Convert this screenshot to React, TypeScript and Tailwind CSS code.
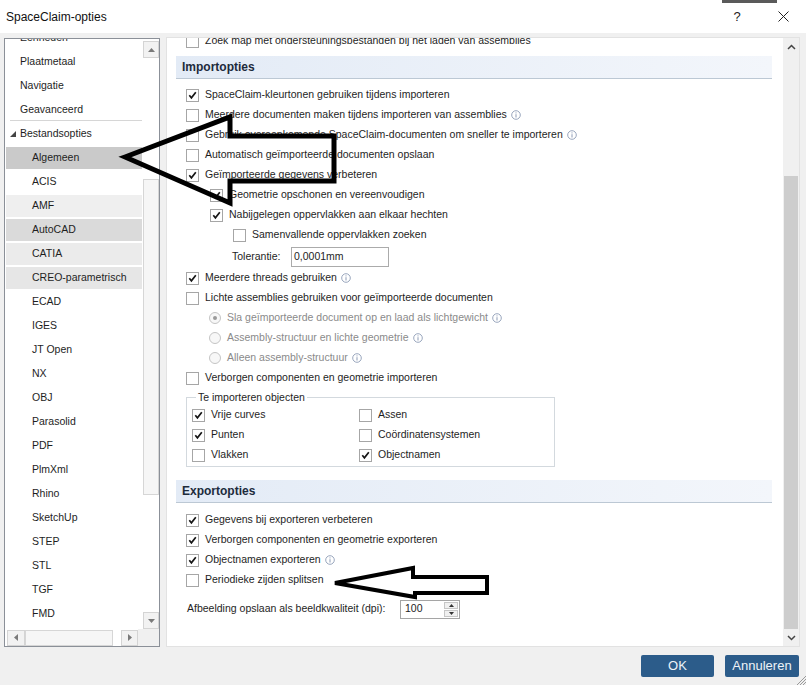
import React from 'react';

type Item = { t: string; sub?: boolean; bg?: string; sep?: boolean; tri?: boolean };

const listItems: Item[] = [
  { t: 'Eenheden' },
  { t: 'Plaatmetaal' },
  { t: 'Navigatie' },
  { t: 'Geavanceerd', sep: true },
  { t: 'Bestandsopties', tri: true },
  { t: 'Algemeen', sub: true, bg: 'bg-[#cacaca]' },
  { t: 'ACIS', sub: true },
  { t: 'AMF', sub: true, bg: 'bg-[#efefef]' },
  { t: 'AutoCAD', sub: true, bg: 'bg-[#dadada]' },
  { t: 'CATIA', sub: true, bg: 'bg-[#ebebeb]' },
  { t: 'CREO-parametrisch', sub: true, bg: 'bg-[#e6e6e6]' },
  { t: 'ECAD', sub: true },
  { t: 'IGES', sub: true },
  { t: 'JT Open', sub: true },
  { t: 'NX', sub: true },
  { t: 'OBJ', sub: true },
  { t: 'Parasolid', sub: true },
  { t: 'PDF', sub: true },
  { t: 'PlmXml', sub: true },
  { t: 'Rhino', sub: true },
  { t: 'SketchUp', sub: true },
  { t: 'STEP', sub: true },
  { t: 'STL', sub: true },
  { t: 'TGF', sub: true },
  { t: 'FMD', sub: true },
];

function Check({ on }: { on?: boolean }) {
  return (
    <span className="w-[13px] h-[13px] shrink-0 border border-[#a6a6a6] bg-white flex items-center justify-center">
      {on && (
        <svg width="9" height="9" viewBox="0 0 9 9">
          <path d="M1.3 4.3 L3.4 6.8 L7.8 1.3" fill="none" stroke="#151515" strokeWidth="1.7" />
        </svg>
      )}
    </span>
  );
}

function Radio({ on }: { on?: boolean }) {
  return (
    <span className="w-[12px] h-[12px] shrink-0 rounded-full border border-[#c4c4c4] bg-[#f7f7f7] flex items-center justify-center">
      {on && <span className="w-[4px] h-[4px] rounded-full bg-[#9a9a9a]" />}
    </span>
  );
}

function Info() {
  return (
    <svg width="10" height="10" viewBox="0 0 10 10" className="ml-[4px] shrink-0">
      <circle cx="5" cy="5" r="4.3" fill="none" stroke="#8d9cb6" strokeWidth="0.9" />
      <rect x="4.5" y="4.2" width="1" height="3.3" fill="#8d9cb6" />
      <rect x="4.5" y="2.4" width="1" height="1" fill="#8d9cb6" />
    </svg>
  );
}

function Opt({ on, info, pad, children }: { on?: boolean; info?: boolean; pad: string; children: React.ReactNode }) {
  return (
    <div className={`h-[20px] flex items-center ${pad}`}>
      <Check on={on} />
      <span className="ml-[6px] whitespace-nowrap">{children}</span>
      {info && <Info />}
    </div>
  );
}

function RadioOpt({ on, children }: { on?: boolean; children: React.ReactNode }) {
  return (
    <div className="h-[20px] flex items-center pl-[42px] text-[#8a8a8a]">
      <Radio on={on} />
      <span className="ml-[6px] whitespace-nowrap">{children}</span>
      <Info />
    </div>
  );
}

function Header({ children }: { children: React.ReactNode }) {
  return (
    <div className="ml-[9px] mr-[11px] h-[23px] flex items-center pl-[6px] font-bold text-[12px] text-[#1d2b3c] bg-linear-to-r from-[#e3ebf6] to-[#f3f6fb] border-b border-[#bcc8d4]">
      {children}
    </div>
  );
}

export default function App() {
  return (
    <div className="relative w-[806px] h-[685px] overflow-hidden bg-[#f0f0f0] text-[10.5px] text-[#1e1e1e] font-['Liberation_Sans',Arial,sans-serif]">
      {/* title bar */}
      <div className="h-[33px] bg-white flex items-center">
        <span className="pl-[6px] text-[12px] text-[#111]">SpaceClaim-opties</span>
        <div className="ml-auto flex items-center h-full">
          <span className="w-[46px] text-center text-[13px] text-[#222]">?</span>
          <span className="w-[46px] flex justify-center">
            <svg width="11" height="11" viewBox="0 0 11 11">
              <path d="M0.5 0.5 L10.5 10.5 M10.5 0.5 L0.5 10.5" stroke="#222" strokeWidth="1" />
            </svg>
          </span>
        </div>
      </div>
      <div className="absolute top-0 left-[722px] w-[55px] h-[3px] bg-[#5a5a5a]" />

      {/* body */}
      <div className="flex pt-[5px]">
        {/* left tree */}
        <div className="ml-[4px] w-[156px] h-[609px] border border-[#8b9098] bg-white flex flex-col">
          <div className="flex flex-1 min-h-0">
            <div className="flex-1 overflow-hidden">
              <div className="mt-[-13px]">
                {listItems.map((it) => (
                  <div key={it.t} className="h-[24px] p-[1px]">
                    <div
                      className={`h-full flex items-center ${it.bg ?? ''} ${it.sub ? 'pl-[26px]' : it.sep ? 'ml-[4px] pl-[10px] border-b border-[#d6d6d6]' : it.tri ? 'pl-[4px]' : 'pl-[14px]'}`}
                    >
                      {it.tri && (
                        <svg width="6" height="6" viewBox="0 0 6 6" className="mr-[4px]">
                          <path d="M6 0 L6 6 L0 6 Z" fill="#444" />
                        </svg>
                      )}
                      <span className="whitespace-nowrap">{it.t}</span>
                    </div>
                  </div>
                ))}
              </div>
            </div>
            {/* vertical scrollbar */}
            <div className="w-[16px] flex flex-col bg-white">
              <div className="h-[17px] mt-[2px] border border-[#d4d4d4] bg-[#f2f2f2] flex items-center justify-center">
                <svg width="7" height="4" viewBox="0 0 7 4"><path d="M0 4 L3.5 0 L7 4 Z" fill="#7a7a7a" /></svg>
              </div>
              <div className="flex-1 flex flex-col">
                <div className="mt-[121px] h-[316px] border border-[#d6d6d6] bg-[#f6f6f6]" />
              </div>
              <div className="h-[17px] border border-[#d4d4d4] bg-[#f2f2f2] flex items-center justify-center">
                <svg width="7" height="4" viewBox="0 0 7 4"><path d="M0 0 L3.5 4 L7 0 Z" fill="#7a7a7a" /></svg>
              </div>
            </div>
          </div>
          {/* horizontal scrollbar */}
          <div className="h-[17px] flex items-center">
            <div className="h-[16px] w-[18px] ml-[2px] border border-[#d4d4d4] bg-[#f2f2f2] flex items-center justify-center">
              <svg width="4" height="7" viewBox="0 0 4 7"><path d="M4 0 L0 3.5 L4 7 Z" fill="#7a7a7a" /></svg>
            </div>
            <div className="h-[16px] w-[88px] border border-[#d6d6d6] bg-[#f6f6f6]" />
            <div className="h-[16px] w-[17px] ml-[8px] border border-[#d4d4d4] bg-[#f2f2f2] flex items-center justify-center">
              <svg width="4" height="7" viewBox="0 0 4 7"><path d="M0 0 L4 3.5 L0 7 Z" fill="#7a7a7a" /></svg>
            </div>
            <div className="flex-1 h-full bg-[#f0f0f0]" />
          </div>
        </div>

        {/* main options panel */}
        <div className="ml-[6px] w-[634px] h-[610px] mt-[-1px] border border-[#e2e2e2] bg-white flex">
          <div className="flex-1 overflow-hidden">
            <div className="mt-[-7px]">
              <Opt pad="pl-[19px]">Zoek map met ondersteuningsbestanden bij het laden van assemblies</Opt>
            </div>
            <div className="mt-[5px]">
              <Header>Importopties</Header>
            </div>
            <div className="mt-[6px]">
              <Opt on pad="pl-[19px]">SpaceClaim-kleurtonen gebruiken tijdens importeren</Opt>
              <Opt info pad="pl-[19px]">Meerdere documenten maken tijdens importeren van assemblies</Opt>
              <Opt info pad="pl-[19px]">Gebruik overeenkomende SpaceClaim-documenten om sneller te importeren</Opt>
              <Opt pad="pl-[19px]">Automatisch geïmporteerde documenten opslaan</Opt>
              <Opt on pad="pl-[19px]">Geïmporteerde gegevens verbeteren</Opt>
              <Opt on pad="pl-[43px]">Geometrie opschonen en vereenvoudigen</Opt>
              <Opt on pad="pl-[43px]">Nabijgelegen oppervlakken aan elkaar hechten</Opt>
              <Opt pad="pl-[66px]">Samenvallende oppervlakken zoeken</Opt>
              <div className="h-[23px] flex items-center pl-[65px]">
                <span className="w-[59px] whitespace-nowrap">Tolerantie:</span>
                <div className="w-[98px] h-[20px] border border-[#ababab] flex items-center pl-[2px]">0,0001mm</div>
              </div>
              <Opt on info pad="pl-[19px]">Meerdere threads gebruiken</Opt>
              <Opt pad="pl-[19px]">Lichte assemblies gebruiken voor geïmporteerde documenten</Opt>
              <RadioOpt on>Sla geïmporteerde document op en laad als lichtgewicht</RadioOpt>
              <RadioOpt>Assembly-structuur en lichte geometrie</RadioOpt>
              <RadioOpt>Alleen assembly-structuur</RadioOpt>
              <Opt pad="pl-[19px]">Verborgen componenten en geometrie importeren</Opt>
            </div>
            <fieldset className="mt-[1px] ml-[19px] w-[369px] border border-[#d3d9de] px-[5px] pb-[1px]">
              <legend className="ml-[4px] px-[2px] leading-[16px]">Te importeren objecten</legend>
              <div className="grid grid-cols-[167px_1fr]">
                <Opt on pad="pl-0">Vrije curves</Opt>
                <Opt pad="pl-0">Assen</Opt>
                <Opt on pad="pl-0">Punten</Opt>
                <Opt pad="pl-0">Coördinatensystemen</Opt>
                <Opt pad="pl-0">Vlakken</Opt>
                <Opt on pad="pl-0">Objectnamen</Opt>
              </div>
            </fieldset>
            <div className="mt-[13px]">
              <Header>Exportopties</Header>
            </div>
            <div className="mt-[7px]">
              <Opt on pad="pl-[19px]">Gegevens bij exporteren verbeteren</Opt>
              <Opt on pad="pl-[19px]">Verborgen componenten en geometrie exporteren</Opt>
              <Opt on info pad="pl-[19px]">Objectnamen exporteren</Opt>
              <Opt pad="pl-[19px]">Periodieke zijden splitsen</Opt>
            </div>
            <div className="mt-[9px] h-[20px] flex items-center pl-[20px]">
              <span className="w-[213px] whitespace-nowrap">Afbeelding opslaan als beeldkwaliteit (dpi):</span>
              <div className="w-[60px] h-[19px] border border-[#a5a5a5] flex items-center">
                <span className="pl-[4px] flex-1">100</span>
                <div className="w-[16px] h-full flex flex-col gap-[1px] p-[1px]">
                  <div className="flex-1 border border-[#c6c6c6] bg-[#f0f0f0] flex items-center justify-center">
                    <svg width="5" height="3" viewBox="0 0 5 3"><path d="M0 3 L2.5 0 L5 3 Z" fill="#333" /></svg>
                  </div>
                  <div className="flex-1 border border-[#c6c6c6] bg-[#f0f0f0] flex items-center justify-center">
                    <svg width="5" height="3" viewBox="0 0 5 3"><path d="M0 0 L2.5 3 L5 0 Z" fill="#333" /></svg>
                  </div>
                </div>
              </div>
            </div>
          </div>
          {/* main scrollbar */}
          <div className="w-[16px] bg-[#f0f0f0] flex flex-col">
            <div className="h-[17px] flex items-center justify-center">
              <svg width="9" height="6" viewBox="0 0 9 6"><path d="M1 5 L4.5 1.5 L8 5" fill="none" stroke="#444" strokeWidth="1.5" /></svg>
            </div>
            <div className="flex-1 flex flex-col pt-[121px] px-[1px]">
              <div className="flex-1 bg-[#cdcdcd]" />
            </div>
            <div className="h-[17px] flex items-center justify-center">
              <svg width="9" height="6" viewBox="0 0 9 6"><path d="M1 1 L4.5 4.5 L8 1" fill="none" stroke="#444" strokeWidth="1.5" /></svg>
            </div>
          </div>
        </div>
      </div>

      {/* footer buttons */}
      <div className="flex justify-end gap-[11px] pt-[8px] pr-[7px]">
        <button className="w-[73px] h-[22px] bg-[#2c5c8a] text-[#eef3f8] text-[13px] rounded-[2px]">OK</button>
        <button className="w-[74px] h-[22px] bg-[#2c5c8a] text-[#eef3f8] text-[13px] rounded-[2px]">Annuleren</button>
      </div>

      {/* resize grip */}
      <svg width="11" height="11" viewBox="0 0 11 11" className="absolute right-0 bottom-0">
        <path d="M11 2 L2 11 M11 5 L5 11 M11 8 L8 11" stroke="#9a9a9a" strokeWidth="1" />
      </svg>

      {/* annotation arrows drawn over the dialog */}
      <svg width="806" height="685" className="absolute inset-0 pointer-events-none">
        <path
          d="M125 157 L230 117 L230 136 L334 136 L334 181 L230 181 L230 203 Z"
          fill="none"
          stroke="#000"
          strokeWidth="5"
          strokeLinejoin="miter"
        />
        <path
          d="M335 583 L413 568 L413 577 L487 577 L487 593 L415 593 L415 597 Z"
          fill="none"
          stroke="#000"
          strokeWidth="4"
          strokeLinejoin="miter"
        />
      </svg>
    </div>
  );
}
